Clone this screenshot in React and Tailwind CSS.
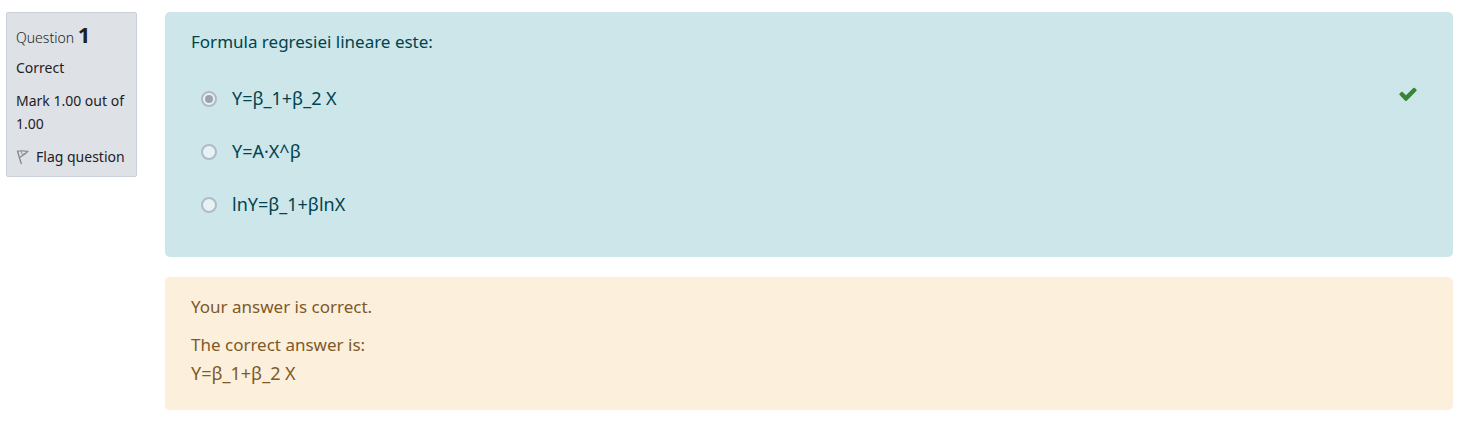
import { useState } from "react";

const answers = ["Y=β_1+β_2 X", "Y=A·X^β", "lnY=β_1+βlnX"];

function FlagIcon() {
  return (
    <svg className="size-4 shrink-0" viewBox="0 0 16 16" fill="none" stroke="#858585" strokeLinejoin="round" aria-hidden="true">
      <path d="M1.5 2.2 5.2 14.5" strokeWidth="1.3" strokeLinecap="round" />
      <path d="M1.5 2.2 5 1.8 12 2.4 8.8 5 4 8.2" strokeWidth="1.1" />
      <path d="M5 2.4 6.2 5.6 9.5 4.2" strokeWidth="0.8" />
    </svg>
  );
}

function CheckIcon() {
  return (
    <svg className="size-5 shrink-0" viewBox="0 0 1792 1792" fill="#398439" role="img" aria-label="Correct">
      <path d="M1671 566q0 40-28 68l-724 724-136 136q-28 28-68 28t-68-28l-136-136-362-362q-28-28-28-68t28-68l136-136q28-28 68-28t68 28l294 295 656-657q28-28 68-28t68 28l136 136q28 28 28 68z" />
    </svg>
  );
}

function Info() {
  return (
    <aside className="flex w-[131px] shrink-0 flex-col gap-2.5 rounded-xs border border-[#cad0d7] bg-[#dee2e6] px-[9px] pt-2.5 pb-2 text-sm leading-[23px] text-[#1d2125]">
      <h3 className="h-[23px] font-light">
        Question <span className="text-[22px] leading-[23px] font-bold">1</span>
      </h3>
      <div>Correct</div>
      <div>Mark 1.00 out of 1.00</div>
      <button type="button" className="flex items-center gap-1 text-left whitespace-nowrap">
        <FlagIcon />
        Flag question
      </button>
    </aside>
  );
}

export default function App() {
  const [selected] = useState(0);
  return (
    <main className="flex items-start gap-7 pt-3 pr-[9px] pb-7 pl-1.5 font-['Noto_Sans',sans-serif]">
      <Info />
      <div className="flex min-w-0 flex-1 flex-col gap-5 text-[17px] leading-7">
        <section className="rounded-[5px] bg-[#cce6ea] px-[26px] pt-4 pb-[38px] text-[#00434e]">
          <p id="prompt">Formula regresiei lineare este:</p>
          <div role="radiogroup" aria-labelledby="prompt" className="mt-7 flex flex-col gap-6 pr-[9px] pl-2.5">
            {answers.map((text, i) => (
              <div key={text} className="flex h-[29px] items-center">
                <input
                  id={`answer-${i}`}
                  type="radio"
                  name="answer"
                  disabled
                  checked={selected === i}
                  readOnly
                  className="grid size-4 shrink-0 appearance-none place-items-center rounded-full border-2 border-[#b0bbc7] bg-[#e7f2f4] before:size-2 before:rounded-full checked:before:bg-[#9ca3b0]"
                />
                <label htmlFor={`answer-${i}`} className="flex-1 pl-[15px] text-lg leading-[29px]">
                  {text}
                </label>
                {selected === i && (
                  <span className="self-start">
                    <CheckIcon />
                  </span>
                )}
              </div>
            ))}
          </div>
        </section>
        <section className="rounded-[5px] bg-[#fcefdc] px-[26px] pt-4 pb-[22px] text-[#7d5a29]">
          <p>Your answer is correct.</p>
          <p className="mt-2.5">
            The correct answer is:
            <br />
            <span className="text-lg leading-7">Y=β_1+β_2 X</span>
          </p>
        </section>
      </div>
    </main>
  );
}
